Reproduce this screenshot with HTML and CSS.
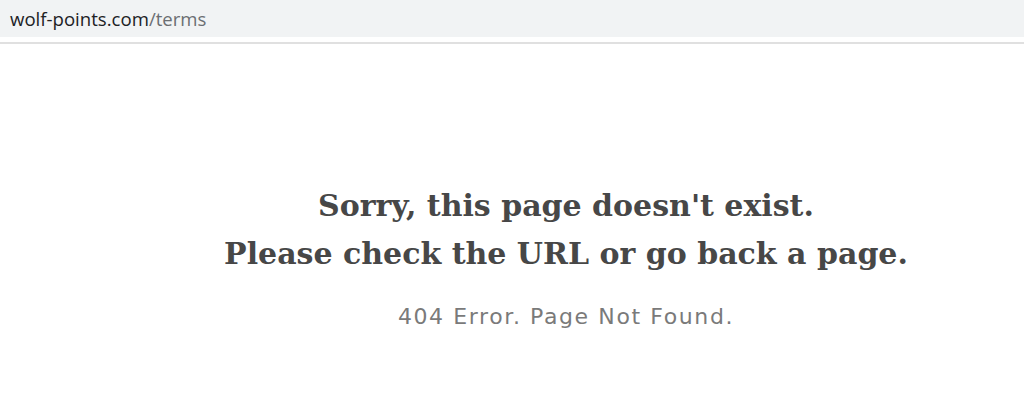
FILE: index.html
```html
<!DOCTYPE html>
<html>
<head>
<meta charset="utf-8">
<link rel="stylesheet" href="styles.css">
</head>
<body>
<div class="urlbar"><span class="host">wolf-points.com</span><span class="path">/terms</span></div>
<div class="rule"></div>
<main class="content">
  <h1 class="title">Sorry, this page doesn't exist.<br>Please check the URL or go back a page.</h1>
  <p class="sub">404 Error. Page Not Found.</p>
</main>
</body>
</html>
```
FILE: styles.css
```css
html, body { margin: 0; padding: 0; background: #fff; }
body { width: 1024px; height: 419px; overflow: hidden; }
.urlbar {
  height: 37px;
  background: #f1f3f4;
  font-family: "Open Sans", "Noto Sans", sans-serif;
  font-size: 18.6px;
  line-height: 37px;
  padding-left: 10px;
  box-sizing: border-box;
  margin-bottom: 5px;
}
.host { color: #202124; }
.path { color: #6b6e72; }
.rule { height: 2px; background: #e0e0e0; }
.content { text-align: center; padding-top: 138px; padding-left: 108px; }
.title {
  margin: 0;
  font-family: "DejaVu Serif", Georgia, serif;
  font-weight: bold;
  font-size: 30px;
  line-height: 48px;
  color: #474747;
}
.sub {
  margin: 26px 0 0;
  font-family: "DejaVu Sans", Verdana, sans-serif;
  font-size: 22px;
  letter-spacing: 1.6px;
  color: #7a7a7a;
}
```
